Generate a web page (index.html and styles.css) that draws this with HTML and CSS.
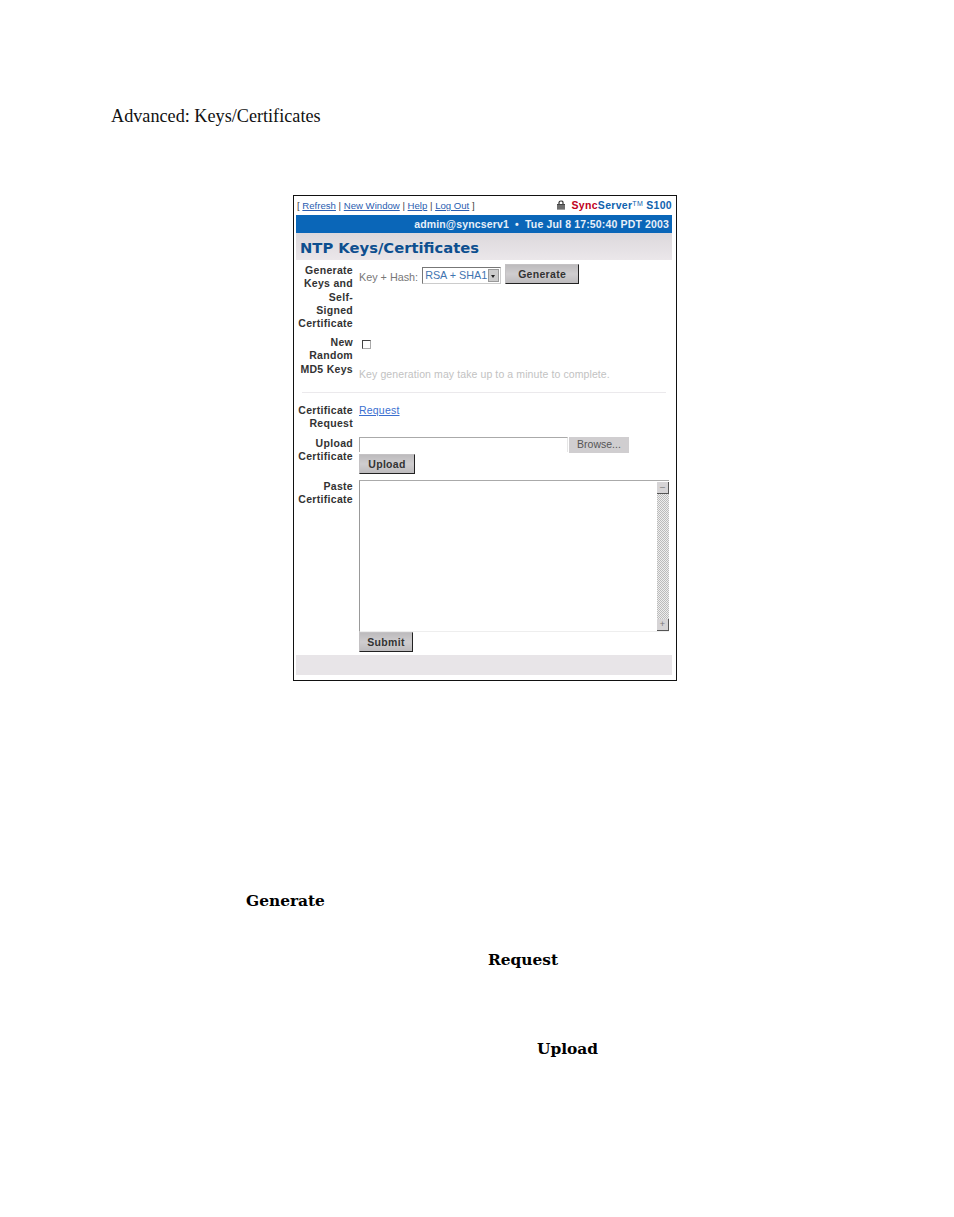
FILE: index.html
```html
<!DOCTYPE html>
<html lang="en">
<head>
    <meta charset="UTF-8">
    <title>Advanced: Keys/Certificates</title>
    <link rel="stylesheet" href="styles.css">
</head>
<body>
    <h1 class="page-heading">Advanced: Keys/Certificates</h1>

    <div class="shot">
        <div class="top-row">
            <div class="top-links">[ <a href="#">Refresh</a> | <a href="#">New Window</a> | <a href="#">Help</a> | <a href="#">Log Out</a> ]</div>
            <div class="brand">
                <svg class="lock" width="10" height="10" viewBox="0 0 10 10"><path d="M3 4V2.5C3 1.4 3.8 1 5 1s2 .4 2 1.5V4" fill="none" stroke="#333" stroke-width="1.2"/><rect x="1" y="4" width="8" height="5.5" fill="#444"/><path d="M1 6h8M1 8h8" stroke="#bbb" stroke-width=".7"/></svg>
                <span class="brand-sync">Sync</span><span class="brand-server">Server<sup>TM</sup> S100</span>
            </div>
        </div>
        <div class="status-bar">admin@syncserv1 &nbsp;•&nbsp; Tue Jul 8 17:50:40 PDT 2003</div>
        <h2 class="title-band">NTP Keys/Certificates</h2>

        <div class="form-row row-generate">
            <div class="label">Generate<br>Keys and<br>Self-<br>Signed<br>Certificate</div>
            <div class="field field-keyhash">
                <span>Key + Hash:</span>
                <div class="select"><span class="select-value">RSA + SHA1</span><span class="select-arrow"></span></div>
                <button class="btn btn-generate">Generate</button>
            </div>
        </div>

        <div class="form-row row-random">
            <div class="label">New<br>Random<br>MD5 Keys</div>
            <div class="field">
                <span class="checkbox"></span>
                <p class="hint">Key generation may take up to a minute to complete.</p>
            </div>
        </div>

        <div class="divider"></div>

        <div class="form-row row-request">
            <div class="label">Certificate<br>Request</div>
            <div class="field"><a class="request-link" href="#">Request</a></div>
        </div>

        <div class="form-row row-upload">
            <div class="label">Upload<br>Certificate</div>
            <div class="field">
                <div class="file-line">
                    <div class="file-input"></div>
                    <div class="browse">Browse...</div>
                </div>
                <button class="btn btn-upload">Upload</button>
            </div>
        </div>

        <div class="form-row row-paste">
            <div class="label">Paste<br>Certificate</div>
            <div class="field">
                <div class="textarea">
                    <div class="scrollbar">
                        <span class="scroll-btn">–</span>
                        <span class="scroll-track"></span>
                        <span class="scroll-btn">+</span>
                    </div>
                </div>
                <button class="btn btn-submit">Submit</button>
            </div>
        </div>

        <div class="footer-band"></div>
    </div>

    <div class="keywords">
        <div class="keyword kw-generate">Generate</div>
        <div class="keyword kw-request">Request</div>
        <div class="keyword kw-upload">Upload</div>
    </div>
</body>
</html>
```

FILE: styles.css
```css
* {
    margin: 0;
    padding: 0;
    box-sizing: border-box;
}

body {
    background: #fff;
    color: #111;
    font-family: "Liberation Sans", Arial, sans-serif;
    height: 1217px;
    overflow: hidden;
}

.page-heading {
    font-family: "Liberation Serif", "Times New Roman", serif;
    font-size: 18.2px;
    font-weight: normal;
    line-height: 18px;
    padding: 107px 0 0 111px;
}

.shot {
    width: 384px;
    height: 486px;
    margin: 70px 0 0 293px;
    border: 1px solid #111;
    padding: 0 4px 5px 2px;
    display: flex;
    flex-direction: column;
    font-size: 10.5px;
    color: #444;
}

.top-row {
    height: 19px;
    display: flex;
    justify-content: space-between;
    align-items: center;
    padding: 0 0 1px 1px;
}

.top-links {
    font-size: 9.6px;
}

.top-links a {
    color: #2a5db0;
}

.brand {
    display: flex;
    align-items: center;
    font-weight: bold;
    letter-spacing: 0.3px;
}

.lock {
    margin-right: 6px;
}

.brand-sync {
    color: #c00020;
}

.brand-server {
    color: #0f62ae;
}

.brand-server sup {
    font-size: 7px;
    font-weight: normal;
    vertical-align: 3px;
    line-height: 0;
}

.status-bar {
    height: 18px;
    background: #0a66b8;
    color: #e8f0f8;
    font-weight: bold;
    font-size: 10.5px;
    letter-spacing: 0.15px;
    line-height: 18px;
    text-align: right;
    padding-right: 3px;
}

.title-band {
    height: 27px;
    background: linear-gradient(#dcd8dc, #ebe7ea);
    color: #0e4f8f;
    font-family: "DejaVu Sans", Verdana, sans-serif;
    font-size: 14.75px;
    line-height: 30px;
    padding-left: 4px;
}

.form-row {
    display: grid;
    grid-template-columns: 58px 1fr;
    column-gap: 5px;
}

.label {
    font-weight: bold;
    font-size: 10.5px;
    line-height: 13.3px;
    letter-spacing: 0.3px;
    color: #333;
    text-align: right;
    padding-right: 1px;
}

.field {
    color: #777;
    font-size: 10.8px;
}

.row-generate {
    padding-top: 4px;
    height: 76px;
}

.field-keyhash {
    display: flex;
    align-items: flex-start;
    line-height: 26px;
}

.select {
    width: 79px;
    height: 17px;
    margin: 3px 4px 0 4px;
    border: 1px solid #777;
    border-right-color: #ccc;
    border-bottom-color: #ccc;
    display: flex;
    justify-content: space-between;
    line-height: 15px;
    color: #3f74b0;
    padding-left: 2px;
    background: #fff;
    white-space: nowrap;
}

.select-arrow {
    width: 11px;
    margin: 1px;
    background: #ccc;
    position: relative;
    border: 1px solid #999;
}

.select-arrow::after {
    content: "";
    position: absolute;
    left: 2px;
    top: 5px;
    border: 2.5px solid transparent;
    border-top: 3px solid #222;
}

.btn {
    display: block;
    font-family: "Liberation Sans", Arial, sans-serif;
    font-weight: bold;
    font-size: 10.5px;
    letter-spacing: 0.3px;
    color: #333;
    background: linear-gradient(#bdbbbd, #cfcdcf 50%, #bdbbbd);
    border: 1px solid #c4c2c4;
    border-right: 1px solid #222;
    border-bottom: 1px solid #222;
    height: 20px;
}

.btn-generate {
    width: 74px;
}

.row-random {
    height: 52px;
}

.checkbox {
    display: block;
    width: 9px;
    height: 9px;
    margin: 4px 0 0 3px;
    border: 1px solid #444;
    border-right-color: #aaa;
    border-bottom-color: #aaa;
}

.hint {
    margin-top: 19px;
    color: #c2c2c2;
    font-size: 10.5px;
    line-height: 13px;
    letter-spacing: 0.1px;
}

.divider {
    height: 1px;
    margin: 4px 6px 11px 6px;
    background: #ebe9ec;
}

.row-request {
    height: 33px;
}

.request-link {
    color: #3a6fd0;
    font-size: 10.5px;
    letter-spacing: 0.2px;
    line-height: 13px;
    display: block;
}

.row-upload {
    height: 43px;
}

.file-line {
    display: flex;
    height: 16px;
}

.file-input {
    width: 209px;
    height: 15px;
    border: 1px solid #aaa;
    border-right-color: #e6e6e6;
    border-bottom: 0;
}

.browse {
    width: 60px;
    height: 16px;
    margin-left: 1px;
    background: #d0ced0;
    color: #555;
    font-size: 10.5px;
    line-height: 15px;
    text-align: center;
}

.btn-upload {
    width: 56px;
    margin-top: 1px;
}

.row-paste {
    height: 173px;
}

.textarea {
    width: 310px;
    height: 152px;
    border-left: 1px solid #999;
    border-top: 1px solid #aaa;
    border-bottom: 1px solid #eee;
    display: flex;
    justify-content: flex-end;
    padding-top: 1px;
}

.scrollbar {
    width: 12px;
    display: flex;
    flex-direction: column;
}

.scroll-btn {
    height: 12px;
    background: #d6d4d6;
    border-right: 1px solid #555;
    border-bottom: 1px solid #555;
    font-size: 9px;
    line-height: 10px;
    text-align: center;
    color: #777;
}

.scroll-track {
    flex: 1;
    background: repeating-conic-gradient(#bbb 0 25%, #eee 0 50%) 0 0 / 2px 2px;
}

.btn-submit {
    width: 54px;
}

.footer-band {
    height: 20px;
    margin-top: 2px;
    background: #e8e5e8;
}

.keywords {
    font-family: "DejaVu Serif", serif;
    font-weight: bold;
    font-size: 15.4px;
    line-height: 18px;
    color: #000;
    padding-top: 211px;
}

.keyword {
    height: 18px;
}

.kw-generate {
    padding-left: 246px;
}

.kw-request {
    padding-left: 488px;
    margin-top: 41px;
}

.kw-upload {
    padding-left: 537px;
    margin-top: 71px;
}
```
